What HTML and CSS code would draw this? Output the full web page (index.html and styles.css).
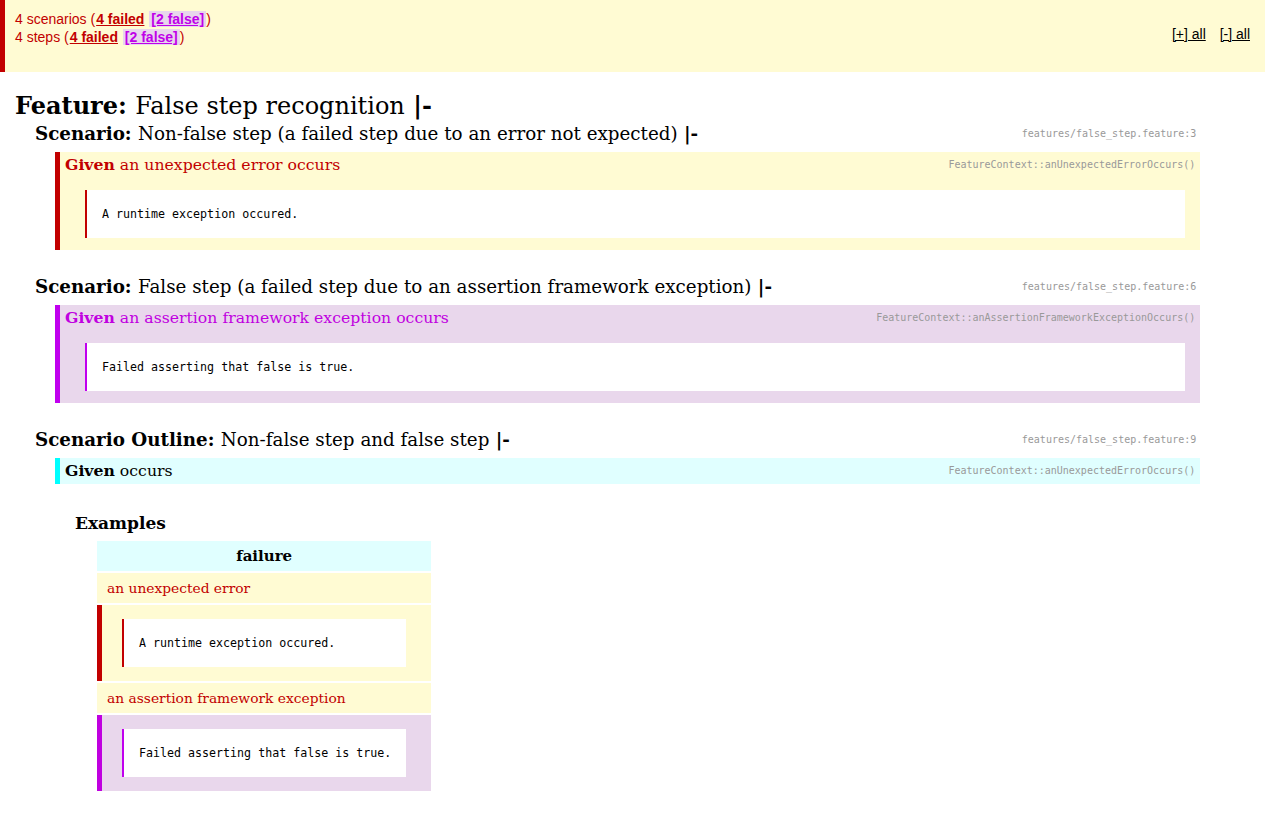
FILE: index.html
```html
<!DOCTYPE html>
<html>
<head>
<meta charset="utf-8">
<title>Behat Test Suite</title>
<link rel="stylesheet" href="styles.css">
</head>
<body>
<div class="behat">
  <div class="summary">
    <div class="counters">
      <p>4 scenarios (<strong class="cnt-failed">4 failed</strong> <strong class="cnt-false">[2 false]</strong>)</p>
      <p>4 steps (<strong class="cnt-failed">4 failed</strong> <strong class="cnt-false">[2 false]</strong>)</p>
    </div>
    <div class="switchers">
      <a class="switcher">[+] all</a> <a class="switcher">[-] all</a>
    </div>
  </div>

  <div class="feature">
    <h2 class="feature-title"><span class="keyword">Feature:</span> <span class="title">False step recognition</span> <span class="toggle">|-</span></h2>

    <div class="scenario">
      <h3 class="scenario-title">
        <span class="heading-text"><span class="keyword">Scenario:</span> <span class="title">Non-false step (a failed step due to an error not expected)</span> <span class="toggle">|-</span></span>
        <span class="path">features/false_step.feature:3</span>
      </h3>
      <ol class="steps">
        <li class="step failed">
          <div class="step-line"><span class="keyword">Given</span>&nbsp;<span class="text">an unexpected error occurs</span><span class="path">FeatureContext::anUnexpectedErrorOccurs()</span></div>
          <pre class="backtrace">A runtime exception occured.</pre>
        </li>
      </ol>
    </div>

    <div class="scenario">
      <h3 class="scenario-title">
        <span class="heading-text"><span class="keyword">Scenario:</span> <span class="title">False step (a failed step due to an assertion framework exception)</span> <span class="toggle">|-</span></span>
        <span class="path">features/false_step.feature:6</span>
      </h3>
      <ol class="steps">
        <li class="step false">
          <div class="step-line"><span class="keyword">Given</span>&nbsp;<span class="text">an assertion framework exception occurs</span><span class="path">FeatureContext::anAssertionFrameworkExceptionOccurs()</span></div>
          <pre class="backtrace">Failed asserting that false is true.</pre>
        </li>
      </ol>
    </div>

    <div class="scenario">
      <h3 class="scenario-title">
        <span class="heading-text"><span class="keyword">Scenario Outline:</span> <span class="title">Non-false step and false step</span> <span class="toggle">|-</span></span>
        <span class="path">features/false_step.feature:9</span>
      </h3>
      <ol class="steps">
        <li class="step skipped">
          <div class="step-line"><span class="keyword">Given</span>&nbsp;<span class="text">occurs</span><span class="path">FeatureContext::anUnexpectedErrorOccurs()</span></div>
        </li>
      </ol>
      <div class="examples">
        <h4>Examples</h4>
        <table class="examples-table">
          <thead>
            <tr class="skipped"><td>failure</td></tr>
          </thead>
          <tbody>
            <tr class="failed"><td>an unexpected error</td></tr>
            <tr class="failed exception"><td><pre class="backtrace">A runtime exception occured.</pre></td></tr>
            <tr class="failed"><td>an assertion framework exception</td></tr>
            <tr class="false exception"><td><pre class="backtrace">Failed asserting that false is true.</pre></td></tr>
          </tbody>
        </table>
      </div>
    </div>
  </div>
</div>
</body>
</html>
```
FILE: styles.css
```css
body {
  margin: 0;
  padding: 0;
  background: #fff;
  font-family: "DejaVu Serif", serif;
}

/* ---------- summary bar ---------- */
.summary {
  display: flex;
  justify-content: space-between;
  align-items: flex-start;
  box-sizing: border-box;
  height: 72px;
  padding: 10px 15px 10px 10px;
  border-left: 5px solid #C20000;
  background: #FFFBD3;
  color: #C20000;
  font-family: "Liberation Sans", Arial, sans-serif;
  font-size: 14px;
  line-height: 18px;
}
.counters p {
  margin: 0;
}
.cnt-failed {
  text-decoration: underline;
  padding: 0 1px;
}
.cnt-false {
  text-decoration: underline;
  color: #C000E8;
  background: #E8D6EC;
  padding: 0 2px;
}
.switchers {
  margin-top: 15px;
}
.switcher {
  margin-left: 10px;
  color: #000;
  text-decoration: underline;
  cursor: pointer;
}

/* ---------- feature ---------- */
.feature {
  padding: 19px 15px 0 15px;
}
.feature-title {
  margin: 0;
  font-size: 24px;
  line-height: 30px;
  font-weight: bold;
}
.title {
  font-weight: normal;
}
.toggle {
  font-weight: bold;
}

/* ---------- scenario ---------- */
.scenario {
  margin-left: 20px;
  margin-bottom: 20px;
}
.scenario-title {
  display: flex;
  align-items: flex-start;
  margin: 0 0 5px 0;
  font-size: 18.3px;
  line-height: 26px;
  font-weight: bold;
}
.path {
  margin-left: auto;
  padding: 0 5px;
  font-family: "DejaVu Sans Mono", monospace;
  font-size: 10px;
  font-weight: normal;
  color: #999;
}
.scenario-title .path {
  margin-right: 4%;
}

.steps {
  display: flow-root;
  list-style: none;
  margin: 0 0 0 20px;
  padding: 0;
}
.step {
  display: flow-root;
  width: 95%;
  padding-left: 5px;
  border-left: 5px solid;
  margin-bottom: 4px;
}
.step-line {
  display: flex;
  align-items: flex-start;
  font-size: 15.7px;
  line-height: 26px;
}
.keyword {
  font-weight: bold;
}

.backtrace {
  margin: 12px 15px 12px 20px;
  padding: 15px;
  border-left: 2px solid #C20000;
  background: #fff;
  color: #000;
  font-family: "DejaVu Sans Mono", monospace;
  font-size: 11.65px;
  line-height: 18px;
  overflow: hidden;
}

/* ---------- examples ---------- */
.examples {
  margin: 25px 0 0 40px;
}
.examples h4 {
  margin: 0 0 6px 0;
  font-size: 17px;
  line-height: 20px;
}
.examples-table {
  margin-left: 20px;
  border-spacing: 2px;
}
.examples-table td {
  padding: 2px 10px;
  font-size: 13.8px;
  line-height: 26px;
}
.examples-table thead td {
  font-weight: bold;
  font-size: 15px;
  text-align: center;
}
.examples-table .exception td {
  border-left: 5px solid;
  padding-left: 0;
}

/* ---------- statuses ---------- */
.failed {
  background: #FFFBD3;
  border-color: #C20000;
  color: #C20000;
}
.false {
  background: #E9D7EC;
  border-color: #C000EE;
  color: #C000E0;
}
.false .backtrace {
  border-left-color: #C000EE;
}
.skipped {
  background: #E0FFFF;
  border-color: #00FFFF;
  color: #000;
}
```
